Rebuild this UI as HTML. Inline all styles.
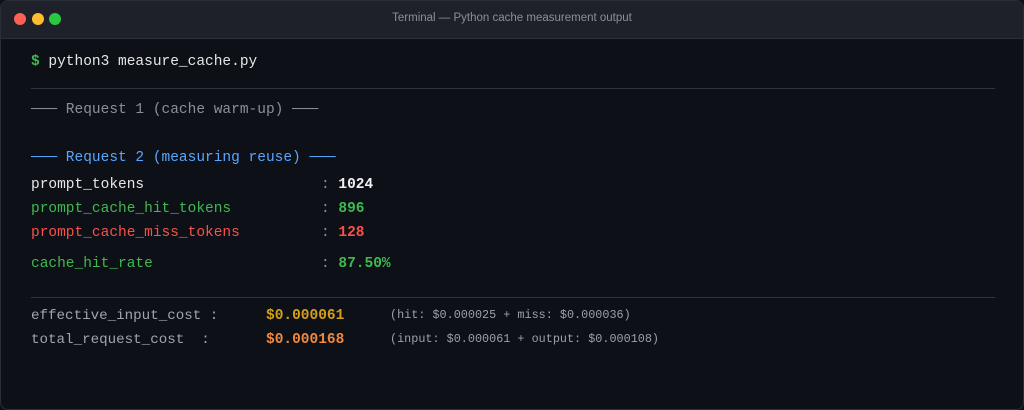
<!DOCTYPE html>
<html><head><style>
html,body{margin:0;padding:0;background:#0d1016;}
.win{position:absolute;left:0;top:0;width:1022px;height:408px;border:1px solid #2a2e36;border-radius:8px;background:#0d1017;overflow:hidden;}
.tb{height:37px;background:#1e2129;border-bottom:1px solid #2c3038;position:relative;}
.dot{position:absolute;top:12px;width:12px;height:12px;border-radius:50%;}
.tt{position:absolute;left:0;right:0;top:11px;text-align:center;font:11.5px "Liberation Sans",sans-serif;color:#8b8f98;}
.m{font-family:"Liberation Mono",monospace;position:absolute;white-space:pre;font-size:14.5px;line-height:18px;}
.hr{position:absolute;left:30px;width:964px;height:1px;background:#30343c;}
</style></head><body>
<div class="win">
<div class="tb">
<div class="dot" style="left:13px;background:#fe5f57"></div>
<div class="dot" style="left:31px;background:#febc2e"></div>
<div class="dot" style="left:48px;background:#28c840"></div>
<div class="tt">Terminal — Python cache measurement output</div>
</div>
<div class="m" style="left:30px;top:52px;color:#e6e6e6"><span style="color:#3fb950;font-weight:bold">$</span> python3 measure_cache.py</div>
<div class="hr" style="top:87px"></div>
<div class="m" style="left:30px;top:100px;color:#8b8f98">─── Request 1 (cache warm-up) ───</div>
<div class="m" style="left:30px;top:148px;color:#58a6ff">─── Request 2 (measuring reuse) ───</div>
<div class="m" style="left:30px;top:175px;color:#e6e6e6">prompt_tokens</div>
<div class="m" style="left:30px;top:199px;color:#3fb950">prompt_cache_hit_tokens</div>
<div class="m" style="left:30px;top:223px;color:#f85149">prompt_cache_miss_tokens</div>
<div class="m" style="left:30px;top:254px;color:#3fb950">cache_hit_rate</div>
<div class="m" style="left:320px;top:175px;color:#8b8f98">: <b style="color:#f0f0f0">1024</b></div>
<div class="m" style="left:320px;top:199px;color:#8b8f98">: <b style="color:#3fb950">896</b></div>
<div class="m" style="left:320px;top:223px;color:#8b8f98">: <b style="color:#f85149">128</b></div>
<div class="m" style="left:320px;top:254px;color:#8b8f98">: <b style="color:#3fb950">87.50%</b></div>
<div class="hr" style="top:296px"></div>
<div class="m" style="left:30px;top:306px;font-size:14.2px;color:#a0a4ab">effective_input_cost :</div>
<div class="m" style="left:30px;top:330px;font-size:14.2px;color:#a0a4ab">total_request_cost  :</div>
<div class="m" style="left:265px;top:306px;font-weight:bold;color:#d4a017">$0.000061</div>
<div class="m" style="left:265px;top:330px;font-weight:bold;color:#f0883e">$0.000168</div>
<div class="m" style="left:389px;top:305px;font-size:11.8px;color:#9aa0a8">(hit: $0.000025 + miss: $0.000036)</div>
<div class="m" style="left:389px;top:329px;font-size:11.8px;color:#9aa0a8">(input: $0.000061 + output: $0.000108)</div>
</div>
</body></html>
